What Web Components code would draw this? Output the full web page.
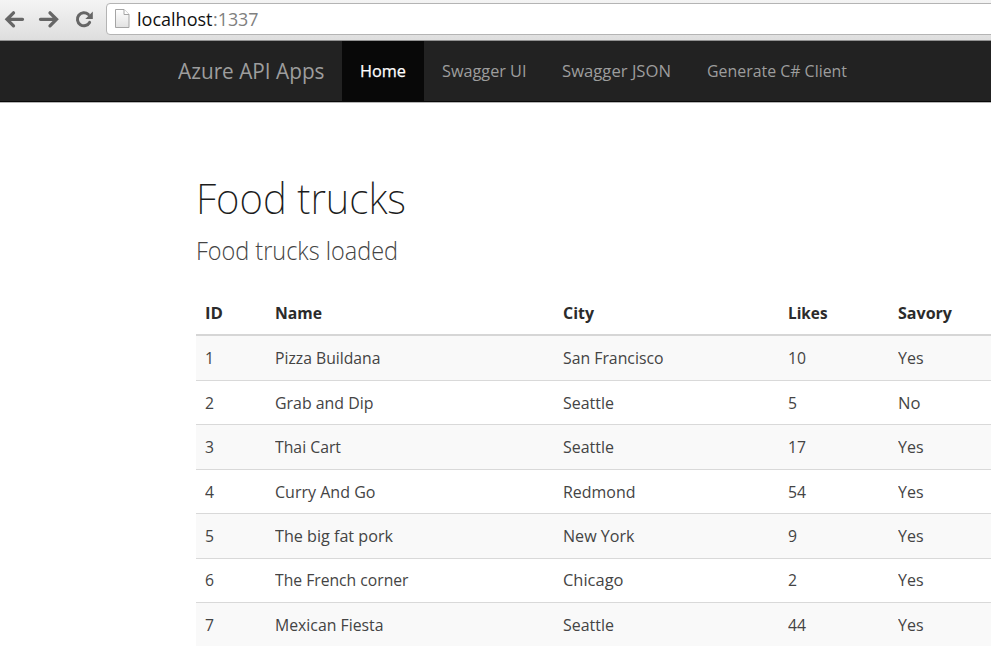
<!DOCTYPE html>
<html lang="en">
<head>
<meta charset="utf-8">
<title>Azure API Apps</title>
<style>
html,body{margin:0;padding:0;background:#fff;overflow:hidden}
body{font-family:"Open Sans","Noto Sans",sans-serif;color:#333;width:991px;height:668px}
</style>
</head>
<body>
<browser-bar></browser-bar>
<nav-bar>
  <nav-item brand><fit-text w="146.5">Azure API Apps</fit-text></nav-item>
  <nav-item active><fit-text w="46">Home</fit-text></nav-item>
  <nav-item><fit-text w="84.5">Swagger UI</fit-text></nav-item>
  <nav-item><fit-text w="109">Swagger JSON</fit-text></nav-item>
  <nav-item><fit-text w="140">Generate C# Client</fit-text></nav-item>
</nav-bar>
<page-content></page-content>
<script>
const define = (name, html, setup) => {
  const tpl = document.createElement('template');
  tpl.innerHTML = html;
  customElements.define(name, class extends HTMLElement {
    connectedCallback() {
      if (this.shadowRoot) return;
      this.attachShadow({mode: 'open'}).append(tpl.content.cloneNode(true));
      if (setup) setup(this, this.shadowRoot);
    }
  });
};

define('nav-item', `<style>
:host{display:flex;align-items:center;box-sizing:border-box;height:60px;padding:0 18px 1px;font-size:16.8px;color:#9d9d9d}
:host([brand]){font-size:21px;padding:0 17.5px 1px 0}
:host([active]){background:#080808;color:#fff;-webkit-text-stroke:.25px #fff;padding:0 17.6px 1px 18.4px}
</style><slot></slot>`);

define('nav-bar', `<style>
:host{display:flex;box-sizing:border-box;height:61px;padding:0 0 0 178px;background:#222;border-bottom:1px solid #080808;box-shadow:0 1px 0 #b5b5b5}
</style><slot></slot>`);

define('browser-bar', `<style>
:host{display:flex;align-items:flex-start;box-sizing:border-box;height:41px;padding-left:4px;background:linear-gradient(#f4f4f4,#dedede);border-bottom:1px solid #929292;overflow:hidden}
svg{display:block;flex:none}
.box{display:flex;align-items:center;box-sizing:border-box;flex:1;height:32px;margin:3px -10px 0 7px;border:1px solid #b4b4b4;border-radius:4px;background:#fff;padding:0 0 1px 8px;font-size:18.5px;color:#111}
.box svg{margin-right:7px}
.port{color:#808080}
</style>
<svg width="95" height="40" viewBox="4 0 95 40" fill="none" stroke="#666" stroke-width="3.3" stroke-linecap="round">
<path d="M7.5 19.3H22.5M13.5 12.8L7 19.3L13.5 25.8"/>
<path d="M40.5 19.3H56M50 12.8L56.5 19.3L50 25.8"/>
<path d="M88.3 14.4A6.5 6.5 0 1 0 89.6 22.4" stroke-width="3"/>
<path d="M92.8 11.5V19H85.3Z" fill="#666" stroke="none"/>
</svg>
<div class="box">
<svg width="15" height="20" viewBox="0 0 15 20"><defs><linearGradient id="g" x2="0" y2="1"><stop stop-color="#fff"/><stop offset="1" stop-color="#e2e2e2"/></linearGradient></defs><path d="M.5 .5H9L14 5.5V18.5H.5Z" fill="url(#g)" stroke="#a5a5a5"/><path d="M9 .5V5.5H14" fill="#fff" stroke="#a5a5a5"/></svg>
<fit-text w="75.5">localhost</fit-text><fit-text class="port" w="45.5">:1337</fit-text>
</div>`);

define('data-row', `<style>
:host{display:grid;grid-template-columns:70px 288px 225px 110px 1fr;align-items:center;box-sizing:border-box;height:44.42px;padding:0 0 .5px 9px;border-top:1px solid #d9d9d9;font-size:16.5px;color:#444}
:host([odd]){background:#f9f9f9}
:host([head]){height:45px;padding-bottom:0;border-top:0;border-bottom:2px solid #d6d6d6;font-weight:700;font-size:16.3px;color:#2b2b2b}
:host([first]){border-top:0;height:43.9px}
</style><slot></slot>`);

define('food-table', `<style>:host{display:block}</style>`, (el, root) => {
  const rows = [
    [['ID',18],['Name',47],['City',31],['Likes',39.5],['Savory',54]],
    [['1',9],['Pizza Buildana',105.5],['San Francisco',100.5],['10',18],['Yes',25.5]],
    [['2',9],['Grab and Dip',98.5],['Seattle',51],['5',9],['No',22.5]],
    [['3',9],['Thai Cart',66],['Seattle',51],['17',18],['Yes',25.5]],
    [['4',9],['Curry And Go',100.5],['Redmond',72.5],['54',18],['Yes',25.5]],
    [['5',9],['The big fat pork',118],['New York',71.5],['9',9],['Yes',25.5]],
    [['6',9],['The French corner',133.5],['Chicago',60.5],['2',9],['Yes',25.5]],
    [['7',9],['Mexican Fiesta',108.5],['Seattle',51],['44',18],['Yes',25.5]]
  ];
  rows.forEach((cells, i) => {
    const row = document.createElement('data-row');
    if (i === 0) row.setAttribute('head', '');
    if (i === 1) row.setAttribute('first', '');
    if (i % 2) row.setAttribute('odd', '');
    for (const [text, w] of cells) {
      const cell = document.createElement('fit-text');
      cell.setAttribute('w', w);
      cell.textContent = text;
      row.append(cell);
    }
    root.append(row);
  });
});

define('page-content', `<style>
:host{display:block;margin-left:196px;padding-top:68px}
h1,h2{margin:0;font-family:"Noto Sans","Open Sans",sans-serif}
h1{font-size:43px;line-height:56px;color:#1c1c1c;font-weight:200}
h2{font-size:25px;line-height:36px;margin-top:6px;color:#444;font-weight:300;font-family:"Open Sans","Noto Sans",sans-serif}
food-table{margin-top:23px}
</style>
<h1><fit-text w="210">Food trucks</fit-text></h1>
<h2><fit-text w="202">Food trucks loaded</fit-text></h2>
<food-table></food-table>`);

/* A run of text condensed or widened to the width given in its w attribute. */
define('fit-text', `<style>
:host{display:block;white-space:pre}
span{display:inline-block;transform-origin:0 50%}
</style><span><slot></slot></span>`, (el, root) => {
  const span = root.querySelector('span');
  const w = +el.getAttribute('w');
  el.style.width = w + 'px';
  const natural = span.getBoundingClientRect().width;
  if (natural) span.style.transform = 'scaleX(' + w / natural + ')';
});
</script>
</body>
</html>
